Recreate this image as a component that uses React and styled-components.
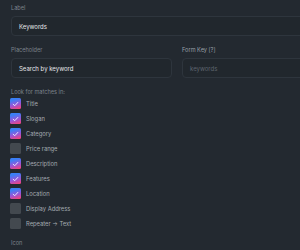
import React from "react";
import styled, { createGlobalStyle } from "styled-components";

const GlobalStyle = createGlobalStyle`
  html, body {
    margin: 0;
    padding: 0;
    background: #232930;
    overflow: hidden;
    font-family: Inter, "Noto Sans", sans-serif;
  }
`;

const fields = [
  { label: "Title", checked: true },
  { label: "Slogan", checked: true },
  { label: "Category", checked: true },
  { label: "Price range", checked: false },
  { label: "Description", checked: true },
  { label: "Features", checked: true },
  { label: "Location", checked: true },
  { label: "Display Address", checked: false },
  { label: "Repeater → Text", checked: false },
];

const App = () => {
  return (
    <>
      <GlobalStyle />
      <Panel>
        <Field>
          <Label>Label</Label>
          <Input>Keywords</Input>
        </Field>
        <Row>
          <Field>
            <Label>Placeholder</Label>
            <Input>Search by keyword</Input>
          </Field>
          <Field>
            <Label $bright>Form Key [?]</Label>
            <Input $muted>keywords</Input>
          </Field>
        </Row>
        <Field>
          <Label>Look for matches in:</Label>
          <Checks>
            {fields.map((f) => (
              <CheckRow key={f.label}>
                <Box $checked={f.checked}>
                  {f.checked && (
                    <svg width="7" height="6" viewBox="0 0 7 6">
                      <path
                        d="M1.2 3.3 L2.8 4.7 L5.8 1.4"
                        fill="none"
                        stroke="#f2f4ff"
                        strokeWidth="0.9"
                        strokeLinecap="round"
                        strokeLinejoin="round"
                      />
                    </svg>
                  )}
                </Box>
                <CheckLabel>{f.label}</CheckLabel>
              </CheckRow>
            ))}
          </Checks>
        </Field>
        <Label>Icon</Label>
      </Panel>
    </>
  );
};

const Panel = styled.div`
  width: 334px;
  padding: 4px 0 0 11px;
  display: flex;
  flex-direction: column;
  gap: 10px;
`;

const Row = styled.div`
  display: grid;
  grid-template-columns: 161px 161px;
  gap: 10px;
`;

const Field = styled.div`
  display: flex;
  flex-direction: column;
  gap: 4px;
`;

const Label = styled.div`
  font-size: 5.6px;
  line-height: 8px;
  color: ${(p) => (p.$bright ? "#9aa0a8" : "#7b828b")};
`;

const Input = styled.div`
  height: 20px;
  box-sizing: border-box;
  border: 1px solid #2e353d;
  border-radius: 4px;
  background: #21272d;
  display: flex;
  align-items: center;
  padding-left: 7px;
  font-size: 6px;
  color: ${(p) => (p.$muted ? "#5e656d" : "#e6e8eb")};
`;

const Checks = styled.div`
  display: flex;
  flex-direction: column;
  gap: 4px;
  margin-top: -2px;
  margin-left: -1px;
`;

const CheckRow = styled.div`
  display: flex;
  align-items: center;
  gap: 5px;
  height: 11px;
`;

const Box = styled.div`
  width: 11px;
  height: 11px;
  border-radius: 1.5px;
  display: flex;
  align-items: center;
  justify-content: center;
  background: ${(p) =>
    p.$checked
      ? "linear-gradient(165deg, #3a7ff6 20%, #9a55d8 60%, #f4437a 95%)"
      : "#43494f"};
`;

const CheckLabel = styled.span`
  font-size: 5.8px;
  color: #a3a9b0;
`;

export default App;
